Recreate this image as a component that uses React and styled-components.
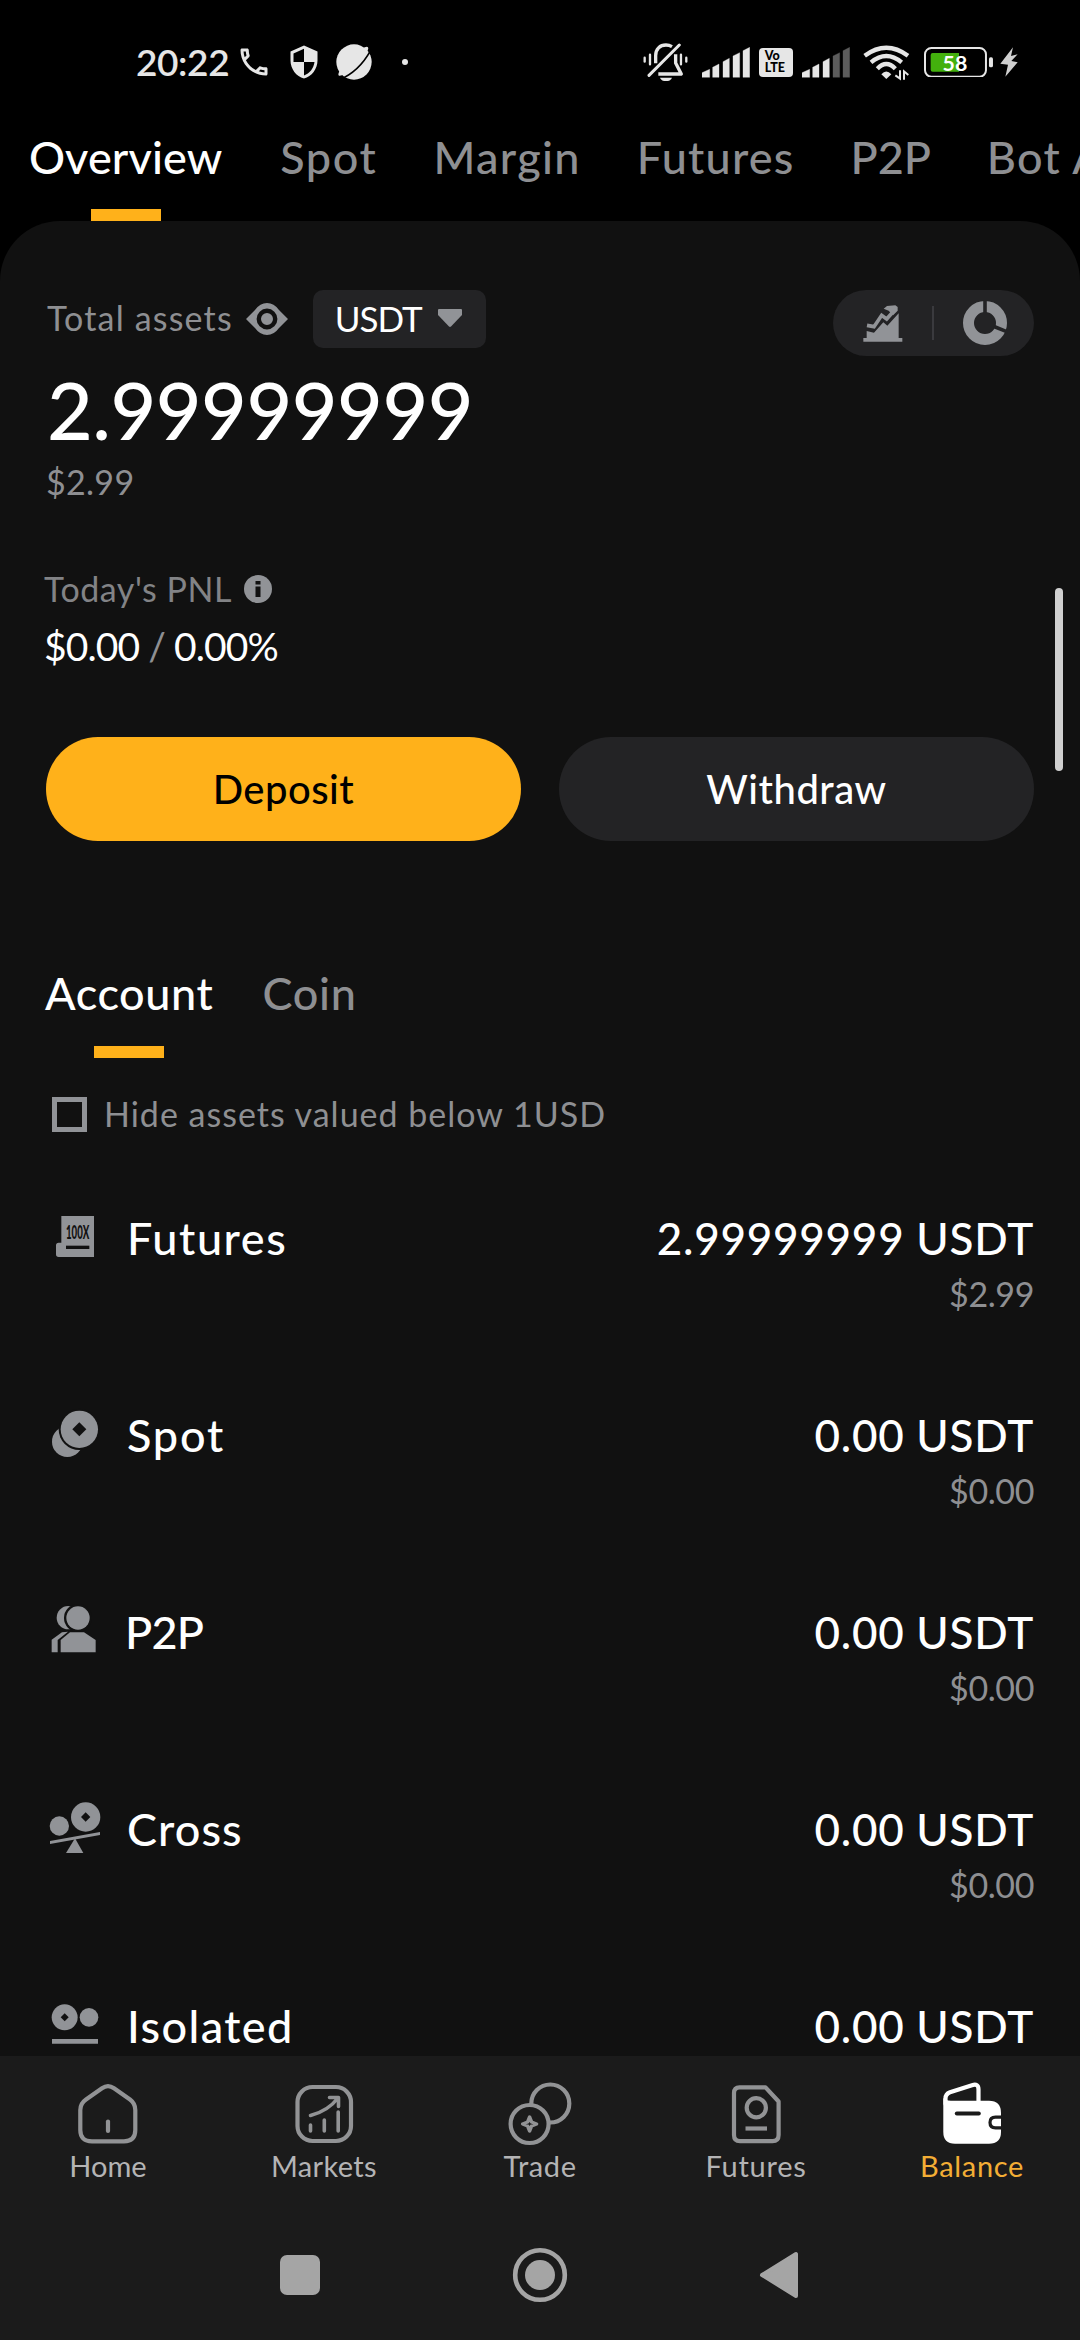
import React from "react";
import styled, { createGlobalStyle } from "styled-components";
import { MdOutlinePhone, MdSecurity } from "react-icons/md";

const GlobalStyle = createGlobalStyle`
  * {
    box-sizing: border-box;
  }
  body {
    margin: 0;
    background: #000000;
    font-family: Lato, "Noto Sans", sans-serif;
    color: #ffffff;
  }
`;

const Phone = styled("div")`
  position: relative;
  display: flex;
  flex-direction: column;
  width: 1080px;
  height: 2340px;
  overflow: hidden;
  background: #000000;
`;

/* status bar */
const StatusBar = styled("div")`
  display: flex;
  align-items: center;
  justify-content: space-between;
  height: 124px;
  padding: 0 62px 0 136px;
  color: #e6e6e6;
`;
const StatusGroup = styled("div")`
  display: flex;
  align-items: center;
`;
const Time = styled("span")`
  font-size: 37px;
  font-weight: 600;
  letter-spacing: -0.4px;
  line-height: 44px;
`;
const StatusIcon = styled("span")`
  display: flex;
  margin-left: ${(p) => p.$gap || 0}px;
`;
const Dot = styled("span")`
  width: 6px;
  height: 6px;
  margin-left: 29px;
  border-radius: 50%;
  background: #e6e6e6;
`;
const Volte = styled("span")`
  display: flex;
  flex-direction: column;
  justify-content: center;
  width: 34px;
  height: 29px;
  margin-left: 9px;
  padding-left: 6px;
  border-radius: 4px;
  background: #e6e6e6;
  color: #000000;
  font-size: 12.5px;
  font-weight: 900;
  line-height: 12px;
`;

/* top tabs */
const Tabs = styled("div")`
  display: flex;
  gap: ${(p) => p.$gap}px;
  margin-left: ${(p) => p.$left}px;
  white-space: nowrap;
`;
const Tab = styled("div")`
  display: flex;
  flex-direction: column;
  align-items: center;
  flex-shrink: 0;
  margin-right: ${(p) => (p.$active ? 2 : 0)}px;
  font-size: 45px;
  font-weight: 500;
  line-height: 66px;
  letter-spacing: ${(p) => p.$ls}px;
  color: ${(p) => (p.$active ? "#ffffff" : "#8e8f92")};
`;
const Mark = styled("div")`
  width: 70px;
  height: 12px;
  margin-top: ${(p) => p.$top}px;
  background: #ffb11a;
`;

/* main panel */
const Panel = styled("div")`
  flex: 1;
  min-height: 0;
  overflow: hidden;
  padding: 69px 46px 0;
  border-radius: 60px 60px 0 0;
  background: #111111;
`;
const AssetsHead = styled("div")`
  display: flex;
  justify-content: space-between;
  align-items: flex-start;
  height: 66px;
`;
const AssetsLabel = styled("div")`
  display: flex;
  align-items: center;
  height: 58px;
`;
const Label = styled("span")`
  padding-bottom: 3px;
  margin-left: 1px;
  font-size: 34px;
  line-height: 40px;
  letter-spacing: 1.17px;
  color: #8e8f92;
`;
const Eye = styled("svg")`
  margin-left: 13px;
`;
const CoinSelect = styled("div")`
  display: flex;
  align-items: center;
  width: 173px;
  height: 58px;
  margin-left: 25px;
  padding: 0 24px 2px 22px;
  justify-content: space-between;
  border-radius: 10px;
  background: #232325;
  font-size: 35px;
  line-height: 42px;
  letter-spacing: -1px;
`;
const Switcher = styled("div")`
  display: flex;
  align-items: center;
  justify-content: space-between;
  width: 201px;
  height: 66px;
  padding: 0 26px 0 30px;
  border-radius: 33px;
  background: #232325;
`;
const Divider = styled("span")`
  width: 2px;
  height: 34px;
  background: #3a3a3e;
`;
const Total = styled("div")`
  margin: 15px 0 0 1px;
  font-size: 79px;
  font-weight: 500;
  line-height: 78px;
  letter-spacing: -0.5px;
`;
const Fiat = styled("div")`
  margin-top: ${(p) => p.$top}px;
  font-size: 34px;
  line-height: 40px;
  letter-spacing: ${(p) => p.$ls}px;
  color: #8e8f92;
`;
const PnlLabel = styled("div")`
  display: flex;
  align-items: center;
  gap: 12px;
  margin: 67px 0 0 -2px;
  font-size: 34px;
  line-height: 40px;
  letter-spacing: 0.53px;
  color: #828386;
`;
const PnlValue = styled("div")`
  display: flex;
  gap: 9px;
  margin: 14px 0 0 -2px;
  font-size: 39px;
  line-height: 46px;
  letter-spacing: -0.9px;
`;
const Slash = styled("span")`
  color: #8e8f92;
`;
const Buttons = styled("div")`
  display: flex;
  gap: 38px;
  margin-top: 68px;
`;
const Btn = styled("button")`
  flex: 1;
  height: 104px;
  padding: 0;
  border: none;
  border-radius: 52px;
  background: ${(p) => (p.$primary ? "#ffb11a" : "#232325")};
  color: ${(p) => (p.$primary ? "#000000" : "#ffffff")};
  font: 500 40px/48px Lato, sans-serif;
  letter-spacing: 0.5px;
`;
const AccountTabs = styled("div")`
  margin-top: 119px;
`;
const HideRow = styled("div")`
  display: flex;
  align-items: center;
  gap: 17px;
  margin-top: 36px;
  padding-left: 6px;
  font-size: 34px;
  line-height: 40px;
  letter-spacing: 1px;
  color: #8e8f92;
`;
const Checkbox = styled("span")`
  width: 35px;
  height: 35px;
  border: 5.5px solid #919397;
`;
const List = styled("div")`
  margin-top: 76px;
`;
const Row = styled("div")`
  display: flex;
  align-items: flex-start;
  height: 197px;
`;
const Name = styled("div")`
  flex: 1;
  margin-left: ${(p) => p.$left || 25}px;
  font-size: 45px;
  font-weight: 500;
  line-height: 56px;
  letter-spacing: ${(p) => p.$ls}px;
`;
const Values = styled("div")`
  text-align: right;
`;
const Amount = styled("div")`
  font-size: 44px;
  font-weight: 500;
  line-height: 56px;
  letter-spacing: 0.77px;
`;
const Scroll = styled("div")`
  position: absolute;
  top: 588px;
  right: 17px;
  width: 8px;
  height: 183px;
  border-radius: 4px;
  background: #d0d0d0;
`;

/* bottom bars */
const Footer = styled("div")`
  height: 284px;
  background: #1b1b1b;
`;
const NavBar = styled("div")`
  display: grid;
  grid-template-columns: repeat(5, 1fr);
  height: 154px;
  padding-top: 25px;
`;
const NavItem = styled("div")`
  display: flex;
  flex-direction: column;
  align-items: center;
  gap: 1px;
  font-size: 29px;
  line-height: 36px;
  letter-spacing: ${(p) => p.$ls}px;
  color: ${(p) => (p.$active ? "#f3ae35" : "#b4b4b5")};
`;
const SystemBar = styled("div")`
  display: flex;
  align-items: center;
  justify-content: center;
  gap: 180px;
  height: 130px;
`;

const GREY = "#919397";
const LIGHT = "#e6e6e6";

function BellOff() {
  return (
    <svg width="45.3" height="38.7" viewBox="67 70 136 116" fill="none" stroke={LIGHT} strokeLinecap="round">
      <path d="M105 131V108C105 88 118 76 136 76C143 76 149 78 154 81" strokeWidth="10" strokeLinecap="butt" />
      <path d="M165 104V130L182 163H113" strokeWidth="10" strokeLinejoin="round" strokeLinecap="butt" />
      <path d="M85 167L176 76" strokeWidth="9" />
      <path d="M72 114V126M88 105V134M181 105V134M197 114V126" strokeWidth="7" />
      <path d="M118 174H154C149 188 123 188 118 174Z" fill={LIGHT} stroke="none" />
    </svg>
  );
}

function Signal({ strength }) {
  const bars = [
    [0, 23, 66],
    [32, 19, 50],
    [63, 19, 33],
    [93, 20, 16],
    [123, 20, 0],
  ];
  return (
    <svg width="48" height="31" viewBox="0 -1 144 93">
      {bars.map(([x, w, top], i) => (
        <path
          key={x}
          d={`M${x} 90V${top + 10}L${x + w} ${top}V90Z`}
          fill={i < strength ? LIGHT : "#5c5c5c"}
          stroke={i < strength ? LIGHT : "#5c5c5c"}
          strokeWidth="1"
        />
      ))}
    </svg>
  );
}

function Wifi() {
  return (
    <svg width="48" height="37" viewBox="722 74 144 111" fill="none" stroke={LIGHT} strokeWidth="13">
      <path d="M730 109Q795 61 860 109" />
      <path d="M749 129Q795 91 841 129" />
      <path d="M768 148Q795 120 822 148" />
      <path d="M780 165Q795 148 810 165L795 179Z" fill={LIGHT} stroke="none" />
      <path d="M836 153V178L822 168M848 181V156L861 167" strokeWidth="6" />
    </svg>
  );
}

function Battery() {
  return (
    <svg width="69.3" height="30.7" viewBox="909 80 208 92">
      <rect x="912" y="83" width="183" height="86" rx="19" fill="none" stroke={LIGHT} strokeWidth="6" />
      <path d="M935 98H1014V154H935Q929 154 929 148V104Q929 98 935 98Z" fill="#43b00d" />
      <rect x="1104" y="111" width="12" height="30" rx="5" fill={LIGHT} />
      <text x="1002" y="152" textAnchor="middle" fontFamily="Lato" fontWeight="700" fontSize="64" fill="#ffffff">
        58
      </text>
    </svg>
  );
}

function Bolt() {
  return (
    <svg width="18" height="30" viewBox="1137 81 54 90">
      <path d="M1176 82L1138 131L1161 134L1153 170L1190 127L1171 123L1190 103L1170 108Z" fill="#cfcfcf" />
    </svg>
  );
}

function Planet() {
  return (
    <svg width="38" height="38" viewBox="709 68 114 114">
      <circle cx="766" cy="125" r="53" fill={LIGHT} />
      <ellipse cx="764" cy="123" rx="61" ry="13" fill={LIGHT} transform="rotate(-44 764 123)" />
      <path d="M722 178Q780 155 816 90" fill="none" stroke="#000000" strokeWidth="5" />
    </svg>
  );
}

function Trend() {
  return (
    <svg width="40" height="38" viewBox="248 132 120 114" fill={GREY}>
      <path d="M249 234H259V213L281 218L309 187L321 197L355 160V234H366V245H249Z" />
      <path d="M260 196L281 200L304 166L319 177L341 152" fill="none" stroke={GREY} strokeWidth="11" />
      <path d="M310 146L320 138L345 136L352 141V152L338 166L325 152Z" />
    </svg>
  );
}

function Donut() {
  return (
    <svg width="46" height="46" viewBox="-23 -23 46 46" fill="none">
      <circle r="16.5" stroke={GREY} strokeWidth="11" />
      <path d="M0 -23V-10M9 3.5L23 9.2" stroke="#232325" strokeWidth="3.6" />
    </svg>
  );
}

const Diamond = ({ x, y, r }) => <path d={`M${x} ${y - r}L${x + r} ${y}L${x} ${y + r}L${x - r} ${y}Z`} fill="#111111" />;

const rowIcons = {
  Futures: (
    <>
      <path d="M46 18H144V141H38Q30 141 30 133V106Q30 98 38 98H46Z" />
      <text x="60" y="88" fontFamily="Lato" fontWeight="900" fontSize="55" textLength="70" lengthAdjust="spacingAndGlyphs" fill="#111111">
        100X
      </text>
      <path d="M60 107H130V117H60Z" fill="#111111" />
    </>
  ),
  Spot: (
    <>
      <circle cx="64" cy="104" r="46" />
      <circle cx="100" cy="67" r="62" fill="#111111" />
      <circle cx="100" cy="67" r="56" />
      <Diamond x={100} y={67} r={21} />
    </>
  ),
  P2P: (
    <>
      <circle cx="67" cy="41" r="35" />
      <circle cx="96" cy="42" r="42" fill="#111111" />
      <circle cx="96" cy="42" r="35" />
      <path d="M17 145V107L48 85L66 83L35 108V145Z" />
      <path d="M44 145V108L72 85H114L149 108V145Z" />
    </>
  ),
  Cross: (
    <>
      <circle cx="40" cy="75" r="29" />
      <circle cx="119" cy="48" r="44" />
      <Diamond x={119} y={48} r={14} />
      <path d="M12 120L162 93V102L12 129Z" />
      <path d="M87 112L60 156H112Z" />
    </>
  ),
  Isolated: (
    <>
      <circle cx="56" cy="58" r="39" />
      <Diamond x={56} y={58} r={12} />
      <circle cx="129" cy="58" r="28" />
      <path d="M18 123H156V137H18Z" />
    </>
  ),
};

const navIcons = {
  Home: (
    <>
      <path d="M27 7.2Q33 3 39 7.2L55 18.5Q60.3 22.5 60.3 29V49Q60.3 60.3 49 60.3H17Q5.3 60.3 5.3 49V29Q5.3 22.5 11 18.5Z" />
      <path d="M33 40.5V50" />
    </>
  ),
  Markets: (
    <>
      <rect x="6.5" y="6" width="53.5" height="54" rx="15" />
      <path d="M19.5 44V50M33.3 39V50M47.2 31V50M19.5 34.5Q37 30 47 17M38.5 16.5H47.5V25.5" strokeWidth="3.6" />
    </>
  ),
  Trade: (
    <>
      <circle cx="43.3" cy="22.5" r="19" />
      <circle cx="22.6" cy="43" r="19" fill="#1b1b1b" />
      <path d="M22.6 36L24.6 41L29.6 43L24.6 45L22.6 50L20.6 45L15.6 43L20.6 41Z" strokeWidth="3.4" />
    </>
  ),
  Futures: (
    <>
      <path d="M16.5 6.3H42.5L55.6 20.5V54Q55.6 60.2 49.5 60.2H17Q11 60.2 11 54V12Q11 6.3 16.5 6.3Z" />
      <circle cx="33.3" cy="26.7" r="9.6" />
      <path d="M22.5 47.5H44" strokeLinecap="butt" />
    </>
  ),
  Balance: (
    <>
      <path d="M6.5 23V17.5Q6.5 13 11 11.3L33 4.2Q39.5 2 39.5 8.5V22" stroke="#ffffff" />
      <path
        d="M4.3 17Q6 19.7 12 19.7H50Q62 19.7 62 32V51Q62 62.7 50 62.7H16Q4.3 62.7 4.3 51Z"
        fill="#ffffff"
        stroke="none"
      />
      <path d="M17.8 32.6H39.8" stroke="#1b1b1b" strokeWidth="4" />
      <path d="M64 36.2H56.5Q51 36.2 51 41.5Q51 46.8 56.5 46.8H64" stroke="#1b1b1b" strokeWidth="3.2" />
    </>
  ),
};

const accounts = [
  { name: "Futures", ls: 1.55, amount: "2.99999999 USDT", fiat: "$2.99" },
  { name: "Spot", ls: 1.8, amount: "0.00 USDT", fiat: "$0.00" },
  { name: "P2P", ls: -0.8, left: 23, amount: "0.00 USDT", fiat: "$0.00" },
  { name: "Cross", ls: 1.1, amount: "0.00 USDT", fiat: "$0.00" },
  { name: "Isolated", ls: 1.4, amount: "0.00 USDT", fiat: "$0.00" },
];

const topTabs = [
  ["Overview", 0.1],
  ["Spot", 1.6],
  ["Margin", 1.3],
  ["Futures", 1.2],
  ["P2P", -0.1],
  ["Bot Account", 1.3],
];

const navItems = [
  ["Home", 0],
  ["Markets", 0.34],
  ["Trade", 0.6],
  ["Futures", 0.75],
  ["Balance", 0.67],
];

function App() {
  return (
    <Phone>
      <GlobalStyle />
      <StatusBar>
        <StatusGroup>
          <Time>20:22</Time>
          <StatusIcon $gap={7}><MdOutlinePhone size={36} /></StatusIcon>
          <StatusIcon $gap={14}><MdSecurity size={36} /></StatusIcon>
          <StatusIcon $gap={13}><Planet /></StatusIcon>
          <Dot />
        </StatusGroup>
        <StatusGroup>
          <StatusIcon><BellOff /></StatusIcon>
          <StatusIcon $gap={13}><Signal strength={5} /></StatusIcon>
          <Volte>
            <span>Vo</span>
            <span>LTE</span>
          </Volte>
          <StatusIcon $gap={9}><Signal strength={3} /></StatusIcon>
          <StatusIcon $gap={12}><Wifi /></StatusIcon>
          <StatusIcon $gap={14}><Battery /></StatusIcon>
          <StatusIcon $gap={7}><Bolt /></StatusIcon>
        </StatusGroup>
      </StatusBar>

      <Tabs $gap={56} $left={29}>
        {topTabs.map(([name, ls], i) => (
          <Tab key={name} $ls={ls} $active={i === 0}>
            {name}
            {i === 0 && <Mark $top={19} />}
          </Tab>
        ))}
      </Tabs>

      <Panel>
        <AssetsHead>
          <AssetsLabel>
            <Label>Total assets</Label>
            <Eye width="42" height="32" viewBox="0 0 42 32">
              <path d="M0 16L9 7Q14 0 21 0Q28 0 33 7L42 16L33 25Q28 32 21 32Q14 32 9 25Z" fill={GREY} />
              <circle cx="21" cy="16" r="8.2" fill="none" stroke="#111111" strokeWidth="4.4" />
            </Eye>
            <CoinSelect>
              USDT
              <svg width="24" height="18" viewBox="0 0 24 18">
                <path d="M1 0H23Q24 0 24 1V6L13 17.5Q12 18.3 11 17.5L0 6V1Q0 0 1 0Z" fill={GREY} />
              </svg>
            </CoinSelect>
          </AssetsLabel>
          <Switcher>
            <Trend />
            <Divider />
            <Donut />
          </Switcher>
        </AssetsHead>
        <Total>2.99999999</Total>
        <Fiat $top={13} $ls={0.3}>$2.99</Fiat>

        <PnlLabel>
          Today's PNL
          <svg width="28" height="28" viewBox="0 0 28 28">
            <circle cx="14" cy="14" r="14" fill={GREY} />
            <path d="M11.5 6H16.5V9.5H11.5ZM11.5 11.5H16.5V22H11.5Z" fill="#111111" />
          </svg>
        </PnlLabel>
        <PnlValue>
          <span>$0.00</span>
          <Slash>/</Slash>
          <span>0.00%</span>
        </PnlValue>

        <Buttons>
          <Btn $primary>Deposit</Btn>
          <Btn>Withdraw</Btn>
        </Buttons>

        <AccountTabs>
          <Tabs $gap={47} $left={-1}>
            <Tab $ls={0.6} $active>
              Account
              <Mark $top={20} />
            </Tab>
            <Tab $ls={0.7}>Coin</Tab>
          </Tabs>
        </AccountTabs>
        <HideRow>
          <Checkbox />
          Hide assets valued below 1USD
        </HideRow>

        <List>
          {accounts.map((a) => (
            <Row key={a.name}>
              <svg width="56" height="56" viewBox="0 0 168 168" fill={GREY}>
                {rowIcons[a.name]}
              </svg>
              <Name $ls={a.ls} $left={a.left}>{a.name}</Name>
              <Values>
                <Amount>{a.amount}</Amount>
                <Fiat $top={8} $ls={-0.4}>{a.fiat}</Fiat>
              </Values>
            </Row>
          ))}
        </List>
      </Panel>
      <Scroll />

      <Footer>
        <NavBar>
          {navItems.map(([name, ls]) => (
            <NavItem key={name} $ls={ls} $active={name === "Balance"}>
              <svg width="66" height="66" viewBox="0 0 66 66" fill="none" stroke="#929395" strokeWidth="4.2" strokeLinecap="round" strokeLinejoin="round">
                {navIcons[name]}
              </svg>
              {name}
            </NavItem>
          ))}
        </NavBar>
        <SystemBar>
          <svg width="60" height="60" viewBox="0 0 60 60">
            <rect x="10" y="10" width="40" height="40" rx="7" fill="#a5a5a5" />
          </svg>
          <svg width="60" height="60" viewBox="0 0 60 60">
            <circle cx="30" cy="30" r="24.8" fill="none" stroke="#a5a5a5" strokeWidth="4.6" />
            <circle cx="30" cy="30" r="15" fill="#a5a5a5" />
          </svg>
          <svg width="60" height="60" viewBox="0 0 60 60">
            <path d="M12 30L46 9V51Z" fill="#a5a5a5" stroke="#a5a5a5" strokeWidth="4" strokeLinejoin="round" />
          </svg>
        </SystemBar>
      </Footer>
    </Phone>
  );
}

export default App;
